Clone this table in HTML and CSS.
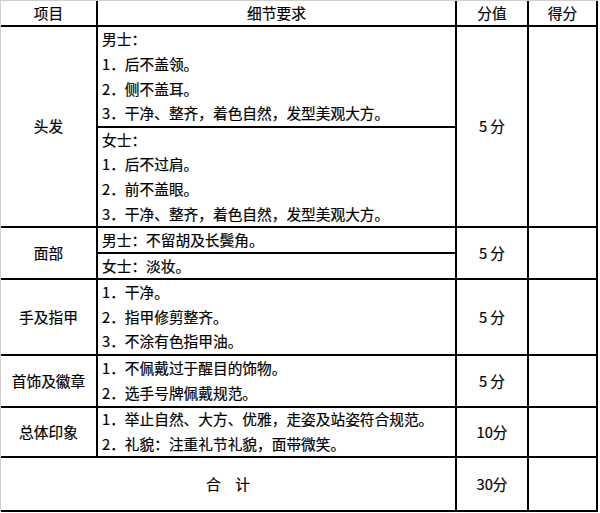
FILE: index.html
```html
<!DOCTYPE html>
<html lang="zh-CN">
<head>
<meta charset="utf-8">
<title>仪容仪表评分表</title>
<link rel="stylesheet" href="styles.css">
</head>
<body>
<div class="frame">
  <div class="grid">
    <div class="cell c">项目</div>
    <div class="cell c">细节要求</div>
    <div class="cell c">分值</div>
    <div class="cell c">得分</div>

    <div class="cell c rs2">头发</div>
    <div class="cell l">
      <div>男士：</div>
      <div>1．后不盖领。</div>
      <div>2．侧不盖耳。</div>
      <div>3．干净、整齐，着色自然，发型美观大方。</div>
    </div>
    <div class="cell c rs2">5 分</div>
    <div class="cell rs2"></div>
    <div class="cell l">
      <div>女士：</div>
      <div>1．后不过肩。</div>
      <div>2．前不盖眼。</div>
      <div>3．干净、整齐，着色自然，发型美观大方。</div>
    </div>

    <div class="cell c rs2">面部</div>
    <div class="cell l"><div>男士：不留胡及长鬓角。</div></div>
    <div class="cell c rs2">5 分</div>
    <div class="cell rs2"></div>
    <div class="cell l"><div>女士：淡妆。</div></div>

    <div class="cell c">手及指甲</div>
    <div class="cell l">
      <div>1．干净。</div>
      <div>2．指甲修剪整齐。</div>
      <div>3．不涂有色指甲油。</div>
    </div>
    <div class="cell c">5 分</div>
    <div class="cell"></div>

    <div class="cell c">首饰及徽章</div>
    <div class="cell l">
      <div>1．不佩戴过于醒目的饰物。</div>
      <div>2．选手号牌佩戴规范。</div>
    </div>
    <div class="cell c">5 分</div>
    <div class="cell"></div>

    <div class="cell c">总体印象</div>
    <div class="cell l">
      <div>1．举止自然、大方、优雅，走姿及站姿符合规范。</div>
      <div>2．礼貌：注重礼节礼貌，面带微笑。</div>
    </div>
    <div class="cell c">10分</div>
    <div class="cell"></div>

    <div class="cell c cs2">合　计</div>
    <div class="cell c">30分</div>
    <div class="cell"></div>
  </div>
</div>
</body>
</html>
```
FILE: styles.css
```css
html, body {
  margin: 0;
  padding: 0;
  background: #ffffff;
}

body {
  width: 600px;
  height: 513px;
  overflow: hidden;
  font-family: "Noto Sans CJK SC", "Noto Sans", sans-serif;
  font-size: 14.7px;
  color: #000000;
  -webkit-text-stroke: 0.2px #000000;
}

.frame {
  width: 597px;
  border-left: 1px solid #cfcfcf;
  border-top: 1px solid #cfcfcf;
}

.grid {
  display: grid;
  grid-template-columns: 95px 357px 70px 67px;
  grid-template-rows: 24px 99px 98px 24px 24px 74px 50px 48px 52px;
  gap: 2px;
  padding: 0 2px 2px 0;
  background: #000000;
}

.cell {
  background: #ffffff;
  display: flex;
  flex-direction: column;
  justify-content: center;
  line-height: 24.6px;
  white-space: nowrap;
}

.c {
  align-items: center;
  text-align: center;
}

.l {
  align-items: flex-start;
  padding-left: 4px;
}

.rs2 {
  grid-row: span 2;
}

.cs2 {
  grid-column: span 2;
}
```
